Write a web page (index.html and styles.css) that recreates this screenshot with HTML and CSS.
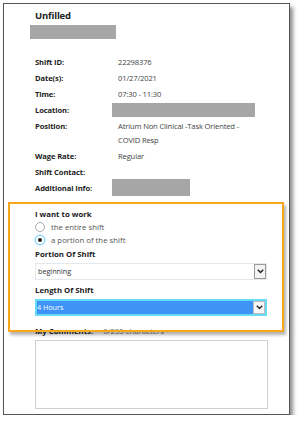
FILE: index.html
```html
<!DOCTYPE html>
<html lang="en">
<head>
    <meta charset="UTF-8">
    <title>Shift Details</title>
    <link rel="stylesheet" href="styles.css">
</head>
<body>
<div class="frame">
    <div class="status">Unfilled</div>
    <div class="redact redact-name"></div>

    <div class="details">
        <div class="lbl">Shift ID:</div><div class="val">22298376</div>
        <div class="lbl">Date(s):</div><div class="val">01/27/2021</div>
        <div class="lbl">Time:</div><div class="val">07:30 - 11:30</div>
        <div class="lbl">Location:</div><div class="val"><div class="redact redact-loc"></div></div>
        <div class="lbl">Position:</div><div class="val">Atrium Non Clinical -Task Oriented -<br>COVID Resp</div>
        <div class="lbl">Wage Rate:</div><div class="val">Regular</div>
        <div class="lbl">Shift Contact:</div><div class="val"></div>
        <div class="lbl">Additional Info:</div><div class="val"><div class="redact redact-info"></div></div>
    </div>

    <div class="highlight">
        <div class="field-title">I want to work</div>
        <div class="radio-row"><span class="radio"></span>the entire shift</div>
        <div class="radio-row"><span class="radio checked"></span>a portion of the shift</div>

        <div class="field-title gap">Portion Of Shift</div>
        <div class="select">
            <span class="select-text">beginning</span>
            <span class="select-btn">
                <svg width="7" height="5" viewBox="0 0 7 5"><path d="M0.8 0.8 L3.5 3.6 L6.2 0.8" fill="none" stroke="#222" stroke-width="1.4"/></svg>
            </span>
        </div>

        <div class="field-title gap2">Length Of Shift</div>
        <div class="select active">
            <span class="select-text">4 Hours</span>
            <span class="select-btn">
                <svg width="7" height="5" viewBox="0 0 7 5"><path d="M0.8 0.8 L3.5 3.6 L6.2 0.8" fill="none" stroke="#222" stroke-width="1.4"/></svg>
            </span>
        </div>
    </div>

    <div class="comments-head"><b>My Comments:</b><span class="count">0/255 characters</span></div>
    <div class="textarea"></div>
</div>
</body>
</html>
```

FILE: styles.css
```css
body {
    margin: 0;
    background: #fff;
    font-family: "Open Sans", "Liberation Sans", sans-serif;
    color: #333;
}

.frame {
    margin: 3px 0 0 3px;
    width: 287px;
    height: 412px;
    border: 1px solid #555;
    box-shadow: 3px 4px 4px rgba(0, 0, 0, 0.45);
    padding: 0 21px 0 31px;
    box-sizing: border-box;
    position: relative;
}

.status {
    font-weight: bold;
    font-size: 9.5px;
    line-height: 12px;
    padding-top: 6px;
    color: #222;
    letter-spacing: -0.2px;
}

.redact {
    background: #a6a6a6;
}

.redact-name {
    width: 86px;
    height: 14px;
    margin: 3px 0 0 -5px;
}

.details {
    display: grid;
    grid-template-columns: 83px 1fr;
    row-gap: 2px;
    margin-top: 16px;
    font-size: 7.6px;
    line-height: 14px;
}

.lbl {
    font-weight: bold;
    color: #222;
    letter-spacing: -0.1px;
}

.val {
    color: #444;
    letter-spacing: -0.15px;
}

.redact-loc {
    width: 143px;
    height: 14px;
    margin-left: -6px;
}

.redact-info {
    width: 78px;
    height: 17px;
    margin: -2px 0 0 -6px;
}

.highlight {
    position: relative;
    z-index: 1;
    margin: 6px -16px 0 -27px;
    height: 130px;
    box-sizing: border-box;
    border: 2px solid #f5a81c;
    box-shadow: 2px 3px 3px rgba(0, 0, 0, 0.3);
    padding: 5px 15px 0 25px;
}

.field-title {
    font-weight: bold;
    font-size: 7.8px;
    line-height: 11px;
    color: #222;
}

.field-title.gap {
    margin-top: 3px;
}

.field-title.gap2 {
    margin-top: 5px;
}

.radio-row {
    display: flex;
    align-items: center;
    height: 13px;
    font-size: 7.8px;
    color: #555;
}

.radio {
    width: 8px;
    height: 8px;
    border: 1px solid #aaa;
    border-radius: 50%;
    margin-right: 6px;
    box-sizing: content-box;
    display: flex;
    align-items: center;
    justify-content: center;
    background: #fff;
}

.radio.checked {
    border-color: #8bd3ee;
    box-shadow: 0 0 0 1px #c9eefa;
}

.radio.checked::after {
    content: "";
    width: 4px;
    height: 4px;
    border-radius: 50%;
    background: #222;
}

.select {
    display: flex;
    align-items: stretch;
    height: 17px;
    margin-top: 3px;
    border: 1px solid #e2e8ec;
    box-sizing: border-box;
    background: #fff;
}

.select-text {
    flex: 1;
    font-size: 7.2px;
    line-height: 15px;
    padding-left: 2px;
    color: #333;
}

.select-btn {
    width: 10px;
    border: 1px solid #999;
    background: #f2f2f2;
    display: flex;
    align-items: center;
    justify-content: center;
}

.select.active {
    border: 2px solid #66dcf2;
    background: #3d94f6;
}

.select.active .select-text {
    color: #fff;
    line-height: 13px;
    padding-left: 0;
}

.select.active .select-btn {
    border: 1px solid #bbb;
    background: #f6f6f6;
}

.comments-head {
    margin-top: -6px;
    font-size: 7.8px;
    line-height: 11px;
    color: #222;
}

.count {
    color: #777;
    margin-left: 10px;
}

.textarea {
    margin-top: 3px;
    height: 69px;
    border: 1.5px solid #cfcfcf;
    box-sizing: border-box;
}
```
